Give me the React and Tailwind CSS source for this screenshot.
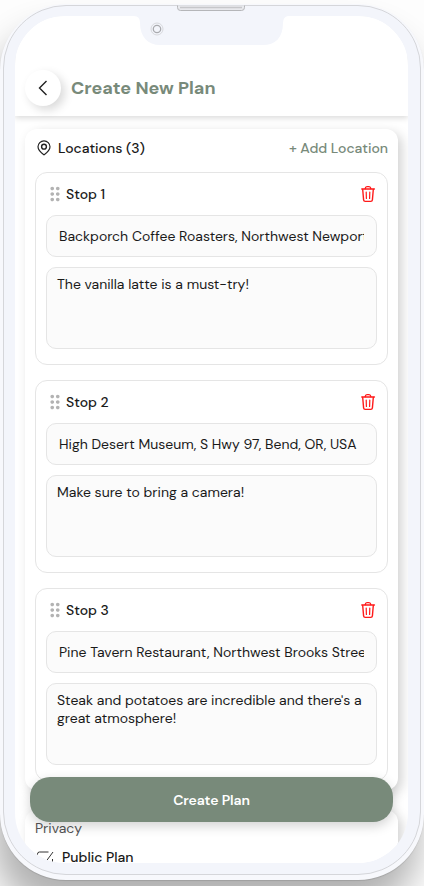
import { useState } from 'react';
import { MdDragIndicator } from 'react-icons/md';

const initialStops = [
  {
    id: 1,
    address: 'Backporch Coffee Roasters, Northwest Newport Avenue, Bend, OR, USA',
    notes: 'The vanilla latte is a must-try!',
  },
  {
    id: 2,
    address: 'High Desert Museum, S Hwy 97, Bend, OR, USA',
    notes: 'Make sure to bring a camera!',
  },
  {
    id: 3,
    address: 'Pine Tavern Restaurant, Northwest Brooks Street, Bend, OR, USA',
    notes: "Steak and potatoes are incredible and there's a great atmosphere!",
  },
];

function TrashIcon() {
  return (
    <svg width="16" height="18" viewBox="0 0 16 18" fill="none" stroke="#ff1a1a" strokeLinecap="round" strokeLinejoin="round">
      <path d="M1.8 4h12.600" strokeWidth="1.500" />
      <path d="M5.200 3.600C5.400 2 6 1.600 7 1.600h2c1 0 1.600.4 1.800 2" strokeWidth="1.400" />
      <path d="M2.700 4.500l.9 10.400c.1 1 .6 1.500 1.600 1.500h5.600c1 0 1.500-.5 1.600-1.500l.9-10.400" strokeWidth="1.400" />
      <path d="M6.200 7l.2 6.400M9.800 7l-.2 6.400" strokeWidth="1.200" />
    </svg>
  );
}

function PinIcon() {
  return (
    <svg className="mr-[7px] ml-0.5" width="14" height="16" viewBox="0 0 14 16" fill="none" stroke="#222" strokeWidth="1.200">
      <path d="M7 14.800C5.600 13.800 1 10.700 1 6.800a6 6 0 0 1 12 0c0 3.900-4.600 7-6 8Z" />
      <circle cx="7" cy="6.700" r="2.400" strokeWidth="1.400" />
    </svg>
  );
}

// One stop with its address and notes
function StopCard({ stop, number, onChange, onDelete }) {
  return (
    <div className="h-[193px] rounded-xl border border-[#e5e5e5] bg-white px-2.5">
      <div className="flex h-[42px] items-center">
        <MdDragIndicator className="-ml-0.5 size-[22px] text-[#b3b3b3]" />
        <span className="text-sm font-medium">Stop {number}</span>
        <button className="mr-px ml-auto" aria-label="Delete stop" onClick={onDelete}>
          <TrashIcon />
        </button>
      </div>
      <input
        className="block h-[42px] w-full rounded-[10px] border border-[#e5e5e5] bg-[#fbfbfb] px-3 text-sm outline-none"
        value={stop.address}
        onChange={(e) => onChange('address', e.target.value)}
      />
      <textarea
        className="mt-2.5 block h-[82px] w-full resize-none rounded-[10px] border border-[#e5e5e5] bg-[#fbfbfb] px-2.5 py-[7px] text-sm leading-[18px] outline-none"
        value={stop.notes}
        onChange={(e) => onChange('notes', e.target.value)}
      />
    </div>
  );
}

export default function App() {
  const [stops, setStops] = useState(initialStops);

  const updateStop = (id, field, value) => {
    setStops(stops.map((s) => (s.id === id ? { ...s, [field]: value } : s)));
  };

  const removeStop = (id) => {
    setStops(stops.filter((s) => s.id !== id));
  };

  const addStop = () => {
    setStops([...stops, { id: Date.now(), address: '', notes: '' }]);
  };

  return (
    <div className="h-[886px] w-[424px] overflow-hidden bg-[#fdfdfd] pt-1 font-['DM_Sans',Inter,sans-serif] text-[#1a1a1a]">

      {/* Phone frame */}
      <div className="relative h-[876px] w-[424px] rounded-[66px] bg-[#f7f8fc] px-[3px] pt-px pb-[5px] shadow-[-6px_30px_36px_rgba(0,0,0,0.3),0_1px_1px_rgba(0,0,0,0.12)]">
        <div className="h-full rounded-[63px] border border-[#d5d6da] bg-[#f3f5fb] pt-[10px] pr-[12px] pb-[11px] pl-[11px]">

          {/* Screen */}
          <div className="relative flex h-[847px] flex-col overflow-hidden rounded-[50px] bg-white">
            <header className="relative z-10 flex h-[100px] shrink-0 items-center gap-2.5 bg-white pt-11 pl-2.5 shadow-[0_2px_6px_rgba(0,0,0,0.15)]">
              <button className="flex size-9 items-center justify-center rounded-full bg-white shadow-[4px_4px_10px_rgba(0,0,0,0.15)]" aria-label="Back">
                <svg width="10" height="16" viewBox="0 0 10 16" fill="none" stroke="#222" strokeWidth="1.400">
                  <path d="M8.500 1 1.500 8l7 7" />
                </svg>
              </button>
              <h1 className="text-lg font-bold text-[#788a7a]">Create New Plan</h1>
            </header>

            <main className="flex flex-col gap-5 px-2.5 pt-[13px]">
              <section className="h-[661px] shrink-0 rounded-xl bg-white px-2.5 shadow-[4px_4px_12px_rgba(0,0,0,0.18)]">
                <div className="flex h-[43px] items-center pb-[5px] text-sm font-medium">
                  <PinIcon />
                  <span>Locations ({stops.length})</span>
                  <button className="ml-auto text-[#788a7a]" onClick={addStop}>+ Add Location</button>
                </div>
                <div className="flex flex-col gap-[15px]">
                  {stops.map((stop, index) => (
                    <StopCard
                      key={stop.id}
                      stop={stop}
                      number={index + 1}
                      onChange={(field, value) => updateStop(stop.id, field, value)}
                      onDelete={() => removeStop(stop.id)}
                    />
                  ))}
                </div>
              </section>

              <section className="h-[90px] shrink-0 rounded-xl bg-white px-2.5 pt-2 shadow-[4px_4px_12px_rgba(0,0,0,0.18)]">
                <p className="text-sm leading-5 text-[#555]">Privacy</p>
                <label className="mt-[9px] flex items-center gap-2 text-sm font-medium">
                  <svg className="ml-px" width="18" height="18" viewBox="0 0 18 18" fill="none" stroke="#333">
                    <path d="M12.500 4H3.500a2 2 0 0 0-2 2v8a2 2 0 0 0 2 2h11a2 2 0 0 0 2-2v-3M7 11l3 2.500L17 4" />
                  </svg>
                  Public Plan
                </label>
              </section>
            </main>

            {/* Sticky submit button */}
            <button className="absolute bottom-[41px] left-[15px] z-10 h-[45px] w-[363px] rounded-[20px] bg-[#788a7a] text-sm font-semibold tracking-[-0.1px] text-white shadow-[0_4px_12px_rgba(0,0,0,0.18)]">
              Create Plan
            </button>
          </div>
        </div>

        {/* Notch with camera and speaker */}
        <svg className="absolute top-0 left-0 z-20" width="424" height="46" viewBox="0 4 424 46" fill="none">
          <path d="M134 16h154q-5 1-5 7c0 15-8 22-20 22H160c-12 0-20-8-20-22q0-7-6-7Z" fill="#f3f5fb" />
          <circle cx="157" cy="29" r="6" stroke="#d8d9dd" />
          <circle cx="157" cy="29" r="3.7" stroke="#aaabaf" strokeWidth="1.3" />
          <path d="M177.500 5.500v2q0 3 3 3h61q3 0 3-3v-2" fill="#e8e9ed" stroke="#b5b6b9" />
          <path d="M180 7.500h62" stroke="#c6c7ca" strokeWidth="1.500" />
        </svg>
      </div>
    </div>
  );
}
